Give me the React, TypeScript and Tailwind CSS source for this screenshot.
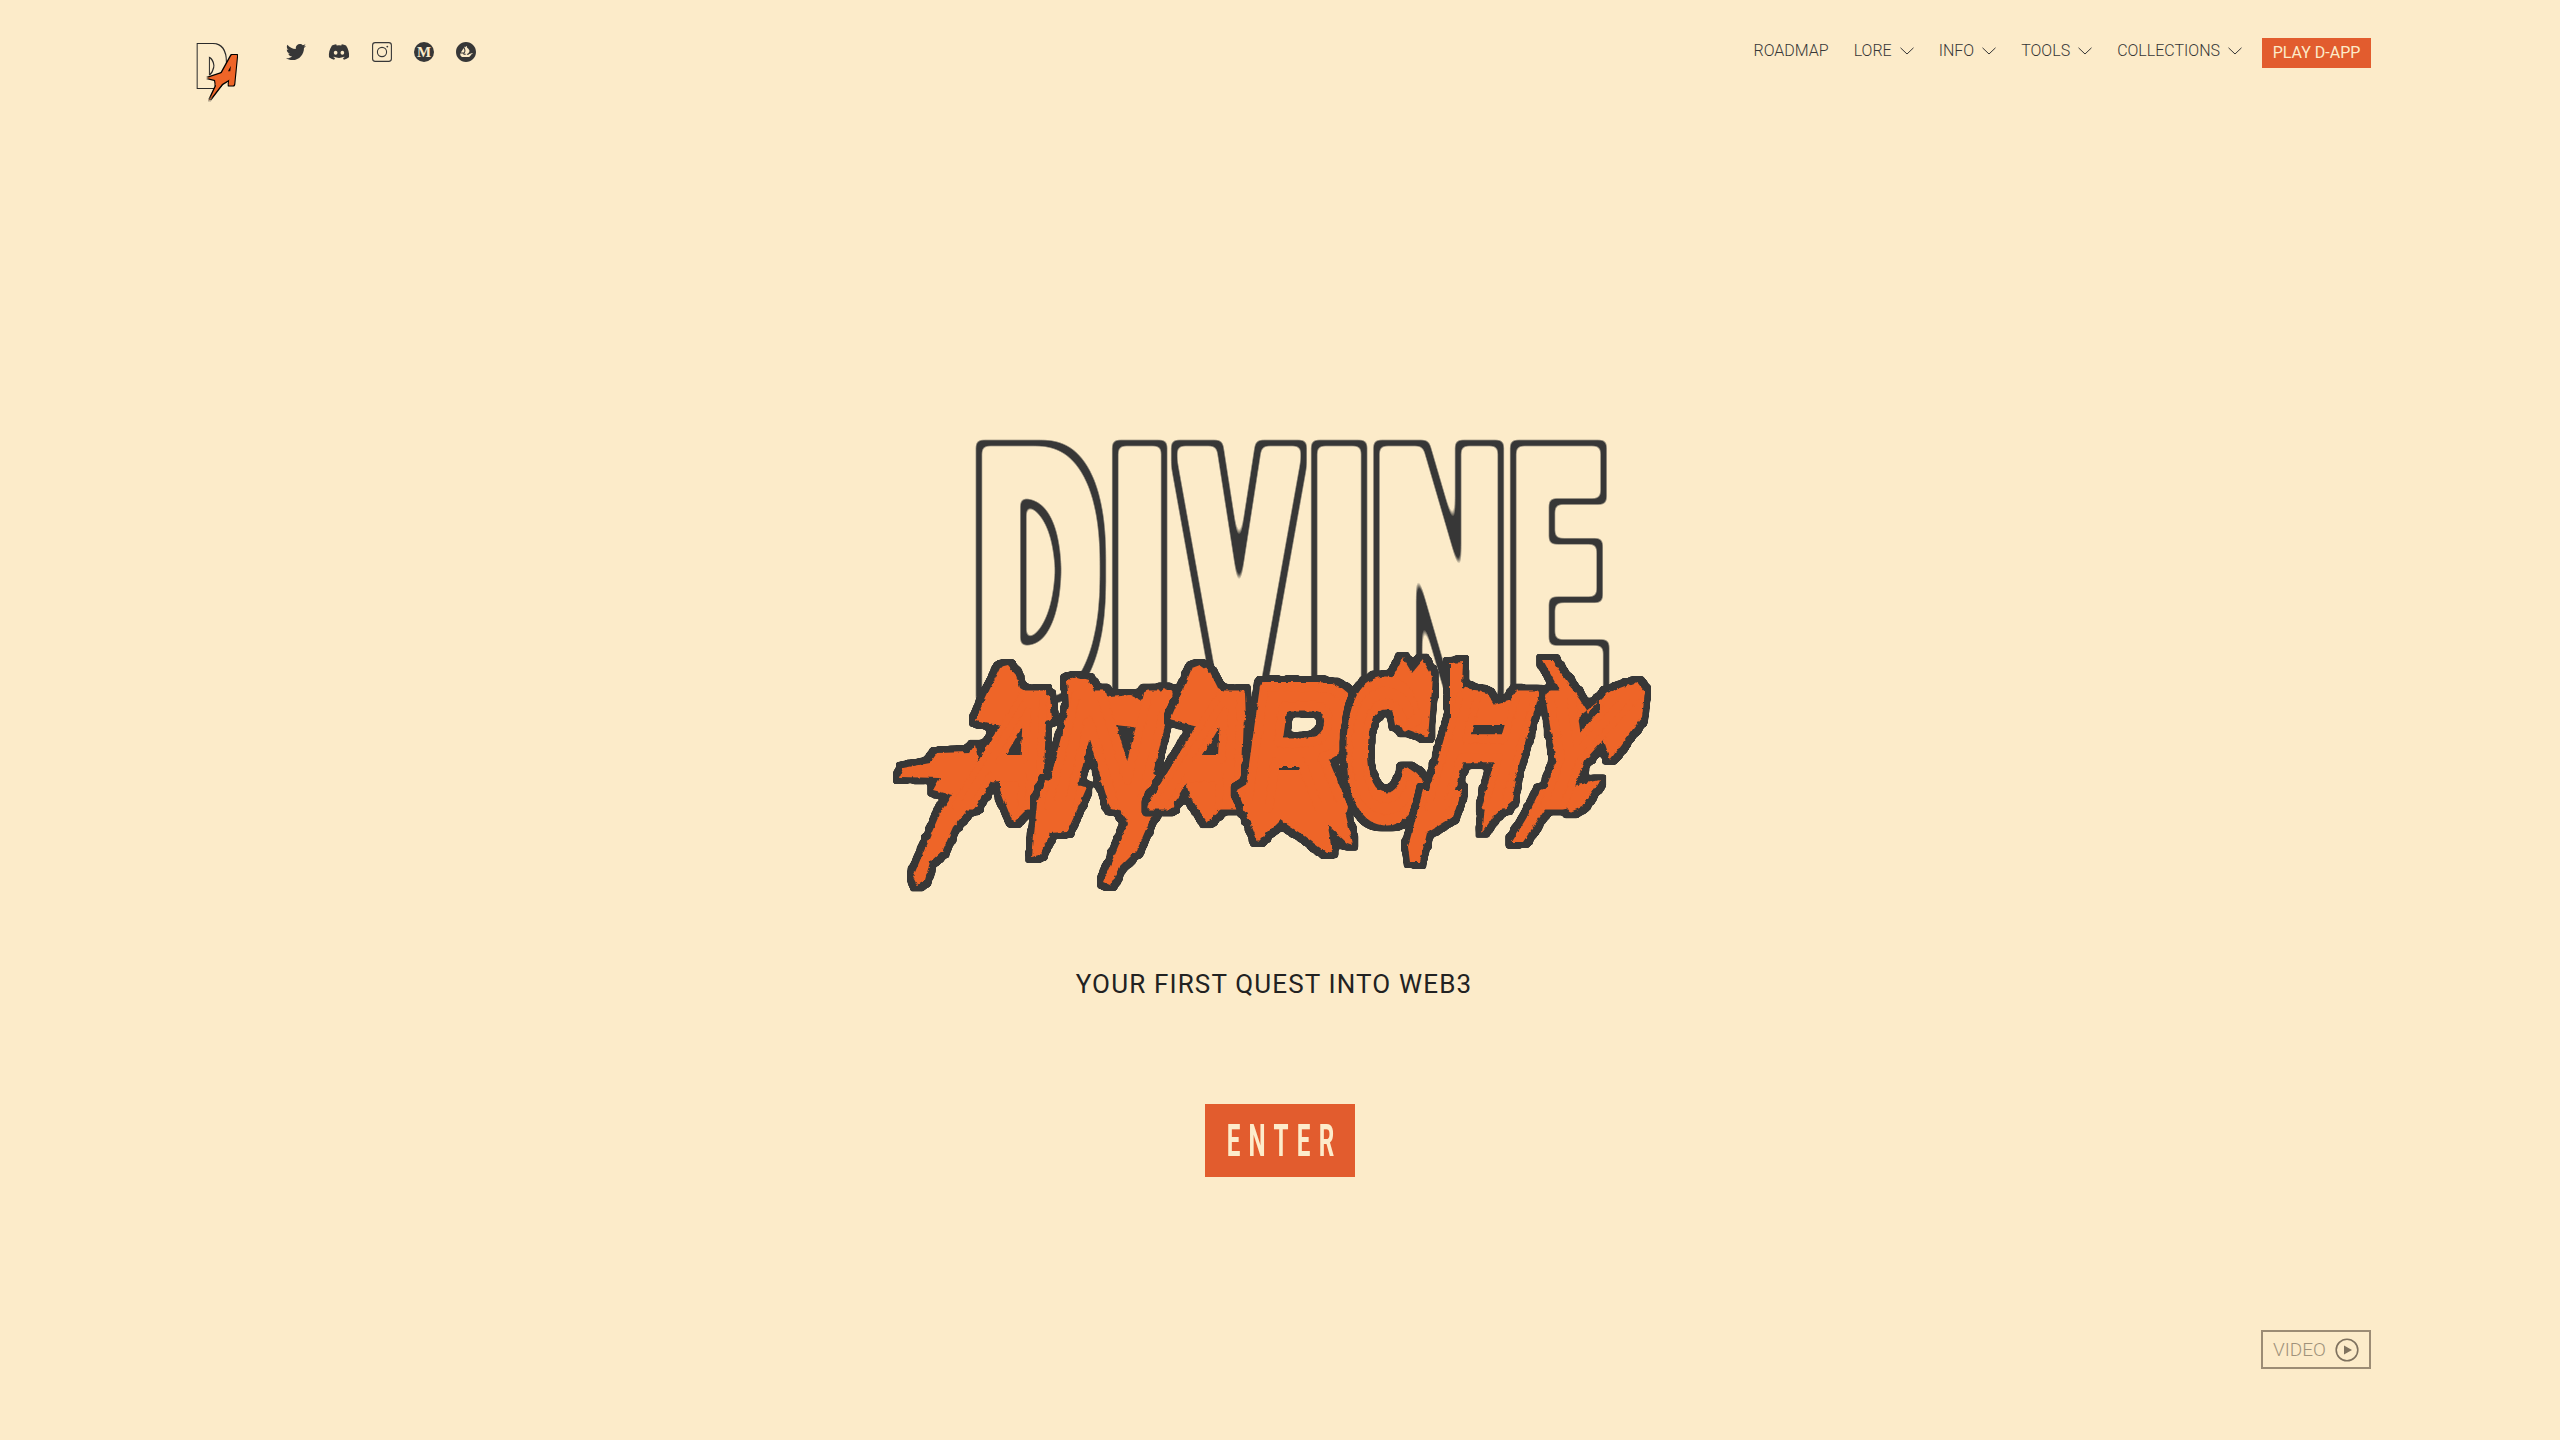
import React from 'react';
import { FaTwitter, FaDiscord } from 'react-icons/fa';
import { SiOpensea } from 'react-icons/si';

const DARK = '#373737';
const ORANGE = '#ee6528';
const CREAM = '#fcebc9';

const fontStack = '"Liberation Sans", Arial, sans-serif';

// outline letters, transform keeps each glyph at the reference width
const divine = [
  { id: 'dv1', char: 'D', tx: 977.6, sx: 0.49 },
  { id: 'dv2', char: 'I', tx: 1111.8, sx: 0.58 },
  { id: 'dv3', char: 'V', tx: 1183, sx: 0.485 },
  { id: 'dv4', char: 'I', tx: 1310.3, sx: 0.6 },
  { id: 'dv5', char: 'N', tx: 1374.6, sx: 0.513 },
  { id: 'dv6', char: 'E', tx: 1514.5, sx: 0.376 },
];

const anarchy = [
  {
    id: 'an1', char: 'A', tx: 952, sx: 0.78, sy: 1, skew: -18, base: 805,
    drips: [
      '975,745 970,752 937,753 930,763 903,768 900,777 940,778 933,790 952,795 940,813 913,877 917,885 925,880 930,862 943,850 953,827 985,790',
      '975,720 1000,668 1008,666 1016,675 1020,688 1035,697 1050,695 1052,720 1020,730',
      '1000,790 1013,823 1023,813 1040,797 1040,780 1000,780',
    ],
  },
  {
    id: 'an2', char: 'N', tx: 1038, sx: 0.98, sy: 1, skew: -14, base: 805,
    drips: [
      '1070,720 1067,680 1078,677 1088,680 1095,692 1110,697 1130,695 1140,700 1155,695 1165,688 1170,710 1160,730',
      '1045,780 1037,803 1032,857 1040,855 1050,833 1067,832 1077,810 1087,787',
      '1100,780 1128,823 1103,882 1110,885 1120,867 1137,850 1150,820 1170,790 1150,770',
    ],
  },
  {
    id: 'an3', char: 'A', tx: 1148, sx: 0.8, sy: 1, skew: -18, base: 805,
    drips: [
      '1170,720 1192,668 1200,665 1210,672 1218,688 1232,695 1245,693 1246,720 1210,730',
      '1185,780 1190,797 1207,822 1223,807 1237,793 1240,775',
    ],
  },
  {
    id: 'an4', char: 'R', tx: 1237, sx: 0.95, sy: 1.1, skew: -8, base: 808,
    drips: [
      '1237,790 1258,842 1280,820 1300,833 1327,853 1332,852 1328,825 1347,843 1353,845 1343,803 1320,770 1270,770',
    ],
  },
  {
    id: 'an5', char: 'C', tx: 1345, sx: 0.67, sy: 1.22, skew: 0, base: 818,
    drips: ['1390,700 1393,677 1403,658 1412,673 1423,660 1433,677 1428,737 1395,725'],
  },
  {
    id: 'an6', char: 'H', tx: 1420, sx: 0.8, sy: 1, skew: -16, base: 805,
    drips: [
      '1450,720 1450,663 1463,662 1462,687 1487,693 1495,705 1512,700 1512,725 1470,725',
      '1423,790 1408,847 1410,862 1420,862 1427,833 1453,817 1462,790',
      '1487,790 1482,833 1493,817 1512,800 1516,780',
    ],
  },
  {
    id: 'an7', char: 'Y', tx: 1507, sx: 0.88, sy: 1, skew: -20, base: 805,
    drips: [
      '1575,720 1543,660 1552,660 1580,700 1588,713 1600,700',
      '1600,700 1607,693 1637,682 1645,692 1642,717 1610,760 1600,730',
      '1565,780 1540,817 1523,842 1512,842 1527,817 1540,790',
      '1555,790 1570,812 1582,807 1600,780',
    ],
  },
];

const DivineAnarchyLogo = () => (
  <svg viewBox="890 430 780 470" width={780} height={470} className="block" fontFamily={fontStack} fontWeight={700}>
    <defs>
      {/* even outline round a narrowed glyph, a scaled stroke would come out uneven */}
      <filter id="hollow" filterUnits="userSpaceOnUse" x={950} y={420} width={700} height={310} colorInterpolationFilters="sRGB">
        <feMorphology in="SourceAlpha" operator="dilate" radius={7} result="innerFat" />
        <feGaussianBlur in="innerFat" stdDeviation={3.5} />
        <feComponentTransfer result="inner">
          <feFuncA type="linear" slope={6} intercept={-2.5} />
        </feComponentTransfer>
        <feMorphology in="SourceAlpha" operator="dilate" radius={13} result="outerFat" />
        <feGaussianBlur in="outerFat" stdDeviation={3.5} />
        <feComponentTransfer result="outer">
          <feFuncA type="linear" slope={6} intercept={-2.5} />
        </feComponentTransfer>
        <feFlood floodColor={DARK} />
        <feComposite in2="outer" operator="in" result="darkLayer" />
        <feFlood floodColor={CREAM} />
        <feComposite in2="inner" operator="in" result="creamLayer" />
        <feMerge>
          <feMergeNode in="darkLayer" />
          <feMergeNode in="creamLayer" />
        </feMerge>
      </filter>
      <filter id="torn" filterUnits="userSpaceOnUse" x={880} y={640} width={790} height={260} colorInterpolationFilters="sRGB">
        <feTurbulence type="fractalNoise" baseFrequency={0.2} numOctaves={2} seed={4} result="noise" />
        <feDisplacementMap in="SourceGraphic" in2="noise" scale={4} xChannelSelector="R" yChannelSelector="G" result="rough" />
        <feMorphology in="rough" operator="dilate" radius={6} />
        <feGaussianBlur stdDeviation={1} />
        <feComponentTransfer result="edge">
          <feFuncA type="linear" slope={6} intercept={-2.5} />
        </feComponentTransfer>
        <feFlood floodColor={DARK} />
        <feComposite in2="edge" operator="in" result="darkLayer" />
        <feMerge>
          <feMergeNode in="darkLayer" />
          <feMergeNode in="rough" />
        </feMerge>
      </filter>
      <filter id="smallHollow" filterUnits="userSpaceOnUse" x={190} y={30} width={45} height={70} colorInterpolationFilters="sRGB">
        <feMorphology in="SourceAlpha" operator="dilate" radius={2.5} result="inner" />
        <feMorphology in="SourceAlpha" operator="dilate" radius={3.5} result="outer" />
        <feFlood floodColor="#2a2a2a" />
        <feComposite in2="outer" operator="in" result="darkLayer" />
        <feFlood floodColor={CREAM} />
        <feComposite in2="inner" operator="in" result="creamLayer" />
        <feMerge>
          <feMergeNode in="darkLayer" />
          <feMergeNode in="creamLayer" />
        </feMerge>
      </filter>
      <filter id="smallEdge" filterUnits="userSpaceOnUse" x={195} y={45} width={50} height={60} colorInterpolationFilters="sRGB">
        <feMorphology in="SourceGraphic" operator="dilate" radius={1} />
        <feComponentTransfer result="edge">
          <feFuncR type="linear" slope={0} />
          <feFuncG type="linear" slope={0} />
          <feFuncB type="linear" slope={0} />
        </feComponentTransfer>
        <feMerge>
          <feMergeNode in="edge" />
          <feMergeNode in="SourceGraphic" />
        </feMerge>
      </filter>
    </defs>

    {divine.map((l) => (
      <g key={l.id} filter="url(#hollow)">
        <text transform={`translate(${l.tx} 691) scale(${l.sx} 1)`} fontSize={346} fill={DARK}>
          {l.char}
        </text>
      </g>
    ))}

    {anarchy.map((l) => (
      <g key={l.id} filter="url(#torn)" fill={ORANGE}>
        {l.drips.map((d, i) => (
          <polygon key={i} points={d} />
        ))}
        <text
          transform={`translate(${l.tx} ${l.base}) skewX(${l.skew}) scale(${l.sx} ${l.sy})`}
          fontSize={160}
          stroke={ORANGE}
          strokeWidth={9}
          strokeLinejoin="round"
        >
          {l.char}
        </text>
      </g>
    ))}
  </svg>
);

const SmallLogo = () => (
  <svg viewBox="190 25 53 80" width={53} height={80} className="block" fontFamily={fontStack} fontWeight={700}>
    <g filter="url(#smallHollow)">
      <text transform="translate(198.3 85) scale(0.66 1)" fontSize={55} fill="#2a2a2a">
        D
      </text>
    </g>
    <g filter="url(#smallEdge)" fill={ORANGE}>
      <polygon points="222,73 207,78 215,80 216,86 209,101 222,84 232,78" />
      <text transform="translate(216 84) skewX(-18) scale(0.62 1)" fontSize={40} stroke={ORANGE} strokeWidth={3} strokeLinejoin="round">
        A
      </text>
    </g>
  </svg>
);

const InstagramIcon = () => (
  <svg viewBox="0 0 20 20" width={20} height={20} fill="none" stroke="#373737" strokeWidth={1.1}>
    <rect x={0.6} y={0.6} width={18.8} height={18.8} rx={2.6} />
    <circle cx={10} cy={10} r={4.6} />
    <circle cx={15.3} cy={4.6} r={0.9} fill="#373737" stroke="none" />
  </svg>
);

const MediumIcon = () => (
  <span className="flex h-5 w-5 items-center justify-center rounded-full bg-[#373737] font-['Liberation_Serif'] text-[15px] leading-none font-bold text-[#fcebc9]">
    M
  </span>
);

const NavChevron = () => (
  <svg viewBox="0 0 14 8" width={14} height={8} fill="none" stroke="#373737" strokeWidth={1}>
    <polyline points="0.5,0.8 7,7 13.5,0.8" />
  </svg>
);

const navItems = [
  { label: 'ROADMAP', menu: false },
  { label: 'LORE', menu: true },
  { label: 'INFO', menu: true },
  { label: 'TOOLS', menu: true },
  { label: 'COLLECTIONS', menu: true },
];

const App: React.FC = () => {
  return (
    <div className="flex h-[1440px] w-full flex-col overflow-hidden bg-[#fcebc9] font-['Roboto',sans-serif] text-[#373737]">
      <header className="flex h-[120px] items-start justify-between pr-[189px] pl-[190px]">
        <div className="flex items-start gap-[43px] pt-[25px]">
          <SmallLogo />
          <div className="mt-[17px] flex h-[20px] items-center gap-[22px] text-[#373737]">
            <FaTwitter className="h-5 w-5" />
            <FaDiscord className="h-[22px] w-[22px]" />
            <InstagramIcon />
            <MediumIcon />
            <SiOpensea className="h-5 w-5" />
          </div>
        </div>
        <nav className="flex items-center gap-[25px] pt-[38px]">
          {navItems.map((item) => (
            <a key={item.label} className="-mt-[4px] flex items-center gap-[8px] text-[16px] leading-[24px] font-light text-[#373737]">
              {item.label}
              {item.menu && <NavChevron />}
            </a>
          ))}
          <a className="-ml-[5px] flex h-[30px] w-[109px] items-center justify-center bg-[#e25c2e] text-[16px] text-[#fcebc9]">
            PLAY D-APP
          </a>
        </nav>
      </header>

      <main className="flex flex-1 flex-col items-center pt-[310px]">
        <DivineAnarchyLogo />
        <p className="mt-[67px] pr-[12px] text-[26px] leading-[34px] tracking-[1.15px] text-[#222222]">
          YOUR FIRST QUEST INTO WEB3
        </p>
        <a className="mt-[103px] flex h-[73px] w-[150px] items-center justify-center bg-[#e25c2e] text-[#fdeccb]">
          <span className="inline-block scale-x-[0.55] pl-[16px] text-[44px] leading-none font-bold tracking-[15px]">ENTER</span>
        </a>
      </main>

      <div className="flex justify-end pr-[189px] pb-[71px]">
        <a className="flex h-[39px] w-[110px] items-center justify-center gap-[9px] border-2 border-[#9c8c75] pt-[1px] text-[19px] font-light text-[#a0927b]">
          VIDEO
          <svg viewBox="0 0 24 24" width={24} height={24} fill="none" stroke="#7f725f" strokeWidth={1.6}>
            <circle cx={12} cy={12} r={10.8} />
            <polygon points="9,7.5 17,12 9,16.5" fill="#7f725f" stroke="none" />
          </svg>
        </a>
      </div>
    </div>
  );
};

export default App;
